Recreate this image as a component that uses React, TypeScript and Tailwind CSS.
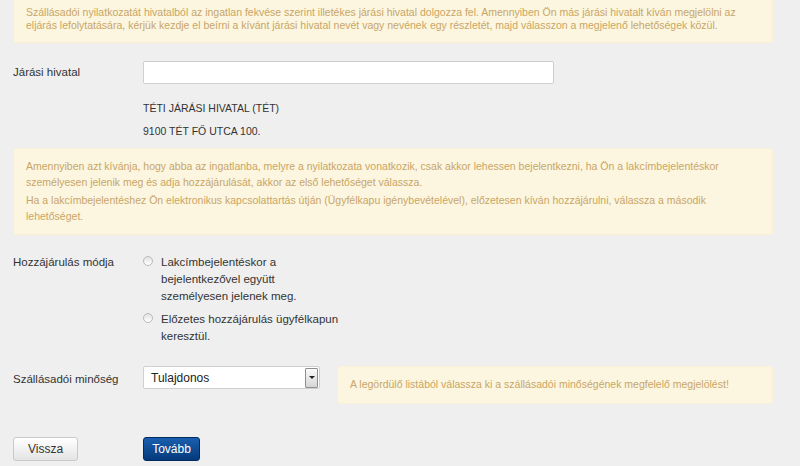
import React from "react"

function Alert({ className, children }: { className?: string; children: React.ReactNode }) {
  return (
    <div
      className={`rounded-[3px] border border-[#fbf0d6] bg-[#fcf6e0] px-[12px] text-[10.5px] text-[#c9a566] ${className ?? ""}`}
    >
      {children}
    </div>
  )
}

function Radio({ children }: { children: React.ReactNode }) {
  return (
    <label className="flex items-start gap-[8px]">
      <span className="mt-[2px] h-[10px] w-[10px] shrink-0 rounded-full border border-[#b9b9b9] bg-gradient-to-b from-[#e2e2e2] to-white" />
      <span className="whitespace-nowrap leading-[17px]">{children}</span>
    </label>
  )
}

export default function App() {
  return (
    <div
      className="h-[466px] w-[800px] overflow-hidden bg-[#efefef] px-[13px] text-[11.5px] text-[#333]"
      style={{ fontFamily: '"Liberation Sans", Arial, sans-serif' }}
    >
      <div className="w-[760px]">
        <Alert className="-mt-[4px] pt-[9px] pb-[10px] leading-[13px]">
          Szállásadói nyilatkozatát hivatalból az ingatlan fekvése szerint illetékes járási hivatal dolgozza fel.
          Amennyiben Ön más járási hivatalt kíván megjelölni az eljárás lefolytatására, kérjük kezdje el beírni a
          kívánt járási hivatal nevét vagy nevének egy részletét, majd válasszon a megjelenő lehetőségek közül.
        </Alert>

        <div className="mt-[18px] flex items-center">
          <div className="w-[130px]">Járási hivatal</div>
          <input className="h-[23px] w-[411px] rounded-[2px] border border-[#cfcfcf] bg-white" />
        </div>

        <div className="ml-[130px] mt-[13px] text-[10.5px] leading-[23px]">
          <div>TÉTI JÁRÁSI HIVATAL (TÉT)</div>
          <div>9100 TÉT FŐ UTCA 100.</div>
        </div>

        <Alert className="mt-[5px] pt-[9px] pb-[10px] leading-[16px]">
          <p>
            Amennyiben azt kívánja, hogy abba az ingatlanba, melyre a nyilatkozata vonatkozik, csak akkor lehessen
            bejelentkezni, ha Ön a lakcímbejelentéskor személyesen jelenik meg és adja hozzájárulását, akkor az első
            lehetőséget válassza.
          </p>
          <p className="mt-[2px]">
            Ha a lakcímbejelentéshez Ön elektronikus kapcsolattartás útján (Ügyfélkapu igénybevételével), előzetesen
            kíván hozzájárulni, válassza a második lehetőséget.
          </p>
        </Alert>

        <div className="mt-[19px] flex">
          <div className="w-[130px] leading-[17px]">Hozzájárulás módja</div>
          <div className="flex flex-col gap-[6px]">
            <Radio>
              Lakcímbejelentéskor a<br />
              bejelentkezővel együtt
              <br />
              személyesen jelenek meg.
            </Radio>
            <Radio>
              Előzetes hozzájárulás ügyfélkapun
              <br />
              keresztül.
            </Radio>
          </div>
        </div>

        <div className="mt-[21px] flex items-start">
          <div className="w-[130px] pt-[5px]">Szállásadói minőség</div>
          <div className="flex h-[23px] w-[177px] items-center rounded-[2px] border border-[#cfcfcf] bg-white pl-[7px] pr-[1px]">
            <span className="flex-1 text-[12px] text-[#222]">Tulajdonos</span>
            <span className="flex h-[20px] w-[13px] items-center justify-center rounded-[1px] border border-[#8f8f8f] bg-gradient-to-b from-[#fafafa] to-[#d6d6d6]">
              <span className="h-0 w-0 border-x-[3px] border-t-[3px] border-x-transparent border-t-[#222]" />
            </span>
          </div>
          <Alert className="ml-[17px] flex h-[38px] flex-1 items-center">
            A legördülő listából válassza ki a szállásadói minőségének megfelelő megjelölést!
          </Alert>
        </div>

        <div className="mt-[33px] flex">
          <div className="w-[130px]">
            <button className="h-[24px] w-[65px] rounded-[3px] border border-[#c9c9c9] bg-gradient-to-b from-white to-[#e4e4e4] text-[12px] text-[#333]">
              Vissza
            </button>
          </div>
          <button className="h-[24px] w-[57px] rounded-[3px] border border-[#032a5e] bg-gradient-to-b from-[#1a5fae] to-[#053a7c] text-[12px] text-white">
            Tovább
          </button>
        </div>
      </div>
    </div>
  )
}
